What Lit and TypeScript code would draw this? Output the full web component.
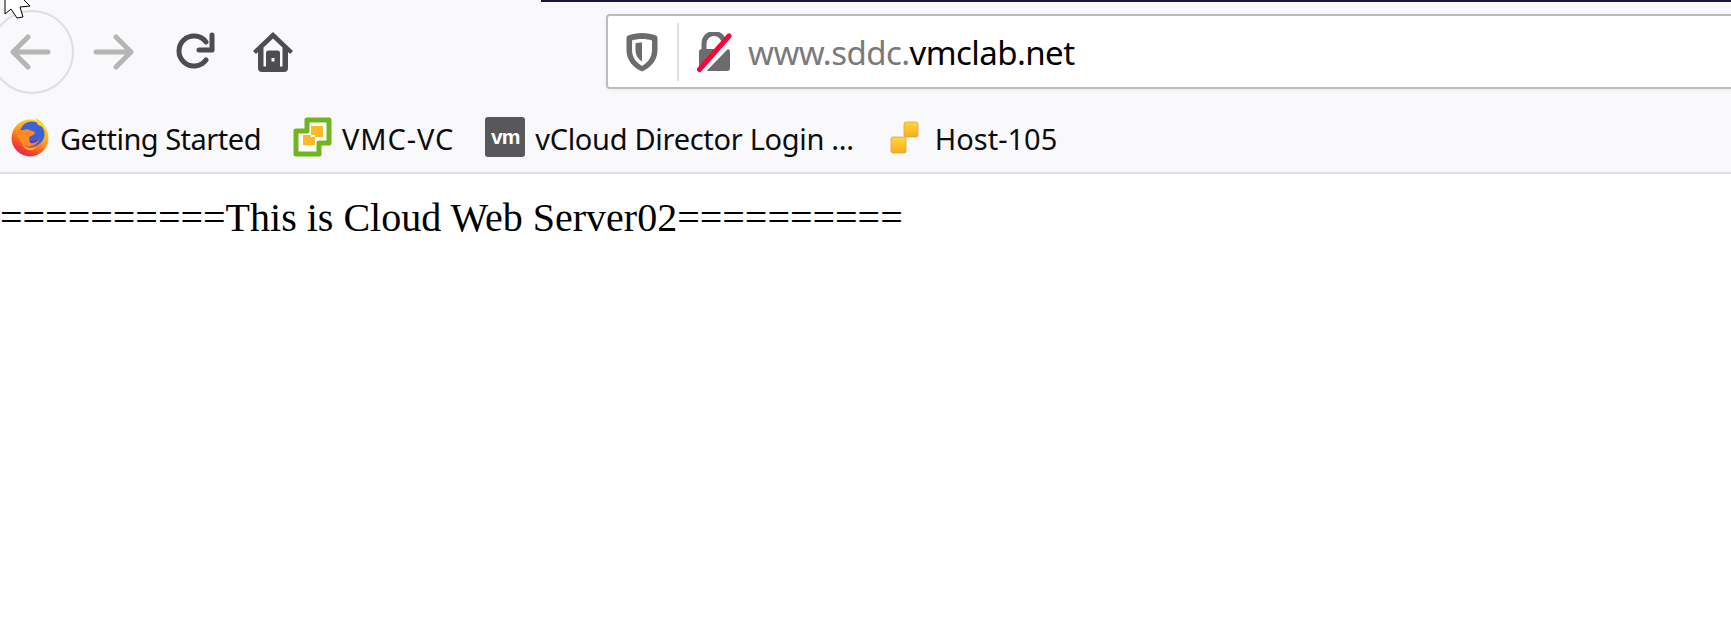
import { LitElement, html, css, svg } from 'lit';
import { customElement } from 'lit/decorators.js';

const firefoxIcon = svg`
  <svg width="40" height="40" viewBox="0 0 40 40">
    <defs>
      <linearGradient id="ff" x1="0.75" y1="0.05" x2="0.25" y2="1">
        <stop offset="0" stop-color="#ffd52e"/>
        <stop offset="0.45" stop-color="#ff9a1f"/>
        <stop offset="0.78" stop-color="#f5402c"/>
        <stop offset="1" stop-color="#d9246e"/>
      </linearGradient>
    </defs>
    <circle cx="20" cy="21" r="18.5" fill="url(#ff)"/>
    <circle cx="22" cy="17" r="12.5" fill="#3b62d6"/>
    <path d="M8 12 C12 14 14 13 17 12 L25 15 C25 18 21 19 19 20 C20 24 25 25 30 21 C28 28 20 31 14 28 C8 24 7 17 8 12 Z" fill="#ff8a22"/>
    <path d="M19 21 C21 24 26 24 30 21 C28 25 24 27 20 26 Z" fill="#5a3fb0"/>
    <path d="M25 1 C31 3 37 9 38.5 19 C36 13 33 9 28 8 C27 5 26 3 25 1 Z" fill="#ffd52e"/>
    <path d="M12 26 C15 31 22 33 28 29 C24 35 14 35 12 26 Z" fill="#ffb21f"/>
  </svg>
`;

const vmcIcon = svg`
  <svg width="40" height="40" viewBox="0 0 40 40">
    <path d="M15 3 H37 V26 H27 V37 H4 V14 H15 Z" fill="#fff" stroke="#6fb51f" stroke-width="5" stroke-linejoin="round"/>
    <path d="M19 9 H31 V20 H23 V28 H11 V18 H19 Z" fill="#fdb827"/>
    <path d="M19 18 H23 V20 H19 Z" fill="#fff"/>
  </svg>
`;

const vmIcon = html`<span class="vm">vm</span>`;

const hostIcon = svg`
  <svg width="40" height="40" viewBox="0 0 40 40">
    <defs>
      <linearGradient id="hy" x1="0" y1="0" x2="0" y2="1">
        <stop offset="0" stop-color="#ffd83a"/>
        <stop offset="1" stop-color="#f6ad1c"/>
      </linearGradient>
    </defs>
    <rect x="6" y="20" width="15" height="16" rx="2" fill="url(#hy)" stroke="#e0a23a" stroke-width="0.8"/>
    <rect x="19" y="5" width="14" height="15" rx="2" fill="url(#hy)" stroke="#e0a23a" stroke-width="0.8"/>
  </svg>
`;

const bookmarks = [
  { label: 'Getting Started', icon: firefoxIcon, tracking: -0.5 },
  { label: 'VMC-VC', icon: vmcIcon, tracking: 0.9 },
  { label: 'vCloud Director Login ...', icon: vmIcon, tracking: -0.3 },
  { label: 'Host-105', icon: hostIcon, tracking: 0 },
];

@customElement('app-root')
export class AppRoot extends LitElement {
  static styles = css`
    :host {
      display: block;
      height: 619px;
      background: #fff;
      overflow: hidden;
      position: relative;
    }

    .chrome {
      background: #f9f9fb;
      border-bottom: 2px solid #e0e0e2;
    }

    .top-edge {
      height: 2px;
      margin-left: 541px;
      background: #15173a;
    }

    .toolbar {
      height: 75px;
      padding-top: 12px;
      display: flex;
      align-items: flex-start;
    }

    .nav {
      width: 606px;
      flex: none;
      height: 76px;
      display: flex;
      align-items: center;
    }

    .nav svg {
      display: block;
      flex: none;
    }

    .back {
      flex: none;
      width: 84px;
      height: 84px;
      margin-left: -10px;
      box-sizing: border-box;
      border: 2px solid #dedee0;
      border-radius: 50%;
      display: flex;
      align-items: center;
      justify-content: center;
      padding-right: 4px;
    }

    .forward {
      margin-left: 19px;
    }

    .reload {
      margin-left: 42px;
    }

    .home {
      margin-left: 36px;
    }

    .urlbar {
      flex: 1;
      height: 75px;
      margin-right: -4px;
      box-sizing: border-box;
      background: #fff;
      border: 2px solid #bcbcbc;
      border-radius: 4px;
      box-shadow: 0 1px 5px rgba(0, 0, 0, 0.05);
      display: flex;
      align-items: center;
    }

    .urlbar svg {
      display: block;
      flex: none;
    }

    .shield {
      margin-left: 18px;
    }

    .divider {
      width: 2px;
      height: 58px;
      margin-left: 19px;
      background: #e0e0e2;
    }

    .lock {
      margin-left: 18px;
    }

    .url {
      margin: 2px 0 0 16px;
      font-family: 'Noto Sans', sans-serif;
      font-size: 33px;
      letter-spacing: -0.55px;
      color: #7a7a7c;
      white-space: nowrap;
    }

    .url b {
      font-weight: 400;
      color: #000;
    }

    .bookmarks {
      height: 67px;
      padding: 16px 0 0 10px;
      display: flex;
      align-items: center;
      gap: 31px;
    }

    .bookmark {
      display: flex;
      align-items: center;
      gap: 10px;
      font-family: 'Noto Sans', sans-serif;
      font-size: 29px;
      color: #0c0c0d;
      white-space: nowrap;
    }

    .bookmark svg {
      display: block;
      flex: none;
      margin-top: -3px;
    }

    .vm {
      width: 40px;
      height: 40px;
      margin-top: -3px;
      border-radius: 3px;
      background: #58585a;
      color: #fff;
      font-family: 'Liberation Sans', sans-serif;
      font-weight: 700;
      font-size: 21px;
      letter-spacing: -1px;
      line-height: 40px;
      text-align: center;
    }

    main {
      padding-top: 21px;
      font-family: 'Liberation Serif', serif;
      font-size: 40px;
      line-height: 46px;
      color: #000;
      white-space: nowrap;
    }

    .cursor {
      position: absolute;
      left: 4px;
      top: -1px;
    }
  `;

  render() {
    return html`
      <div class="chrome">
        <div class="top-edge"></div>
        <div class="toolbar">
          <div class="nav">
            <div class="back">
              <svg width="41" height="36" viewBox="0 0 41 36" fill="none" stroke="#b5b5b6" stroke-width="5" stroke-linecap="round" stroke-linejoin="round">
                <path d="M3 18 H38 M18 3 L3 18 L18 33"/>
              </svg>
            </div>
            <svg class="forward" width="41" height="36" viewBox="0 0 41 36" fill="none" stroke="#b5b5b6" stroke-width="5" stroke-linecap="round" stroke-linejoin="round">
              <path d="M3 18 H38 M23 3 L38 18 L23 33"/>
            </svg>
            <svg class="reload" width="40" height="40" viewBox="0 0 40 40" fill="none" stroke="#4d4d4f" stroke-width="5" stroke-linecap="round" stroke-linejoin="round">
              <path d="M30 28 A15 15 0 1 1 30 10"/>
              <path d="M36 3 V18 H23"/>
            </svg>
            <svg class="home" width="42" height="42" viewBox="0 0 42 42">
              <path d="M21 1 L41 20 L38 23 L36 21 V37 Q36 41 32 41 H10 Q6 41 6 37 V21 L4 23 L1 20 Z" fill="#4d4d4f"/>
              <path d="M21 7.5 L30.5 16.5 V35.5 H28 V22 Q28 19.5 25.5 19.5 H16.5 Q14 19.5 14 22 V35.5 H11.5 V16.5 Z" fill="#f9f9fb"/>
              <rect x="19.5" y="27" width="3" height="3.5" fill="#f9f9fb"/>
            </svg>
          </div>
          <div class="urlbar">
            <svg class="shield" width="32" height="40" viewBox="0 0 32 40">
              <path d="M16 1 C21 1 26 2 30 3.5 Q31.5 4 31.5 6 V18 C31.5 29 24 36 16 39.5 C8 36 0.5 29 0.5 18 V6 Q0.5 4 2 3.5 C6 2 11 1 16 1 Z" fill="#6c6c6e"/>
              <path d="M16 7 C20 7 23 7.5 26 8.5 V18 C26 26 21 31 16 34 C11 31 6 26 6 18 V8.5 C9 7.5 12 7 16 7 Z" fill="#fff"/>
              <path d="M16 10.5 V29.5 C12 27 9.5 23 9.5 18 V11.3 C11.5 10.8 13.5 10.5 16 10.5 Z" fill="#6c6c6e"/>
            </svg>
            <div class="divider"></div>
            <svg class="lock" width="35" height="40" viewBox="0 0 35 40">
              <path d="M7 18 V12 C7 5 12 1.5 17 1.5 C22 1.5 27 5 27 12 V18" fill="none" stroke="#6c6c6e" stroke-width="5"/>
              <rect x="2" y="17" width="31" height="22" rx="3" fill="#6c6c6e"/>
              <path d="M2 41 L36 6" stroke="#fff" stroke-width="8"/>
              <path d="M2.5 37.5 L32 4" stroke="#ff0039" stroke-width="5" stroke-linecap="round"/>
            </svg>
            <span class="url">www.sddc.<b>vmclab.net</b></span>
          </div>
        </div>
        <div class="bookmarks">
          ${bookmarks.map(
            (b) => html`<div class="bookmark">${b.icon}<span style="letter-spacing: ${b.tracking}px">${b.label}</span></div>`
          )}
        </div>
      </div>
      <main>==========This is Cloud Web Server02==========</main>
      <svg class="cursor" width="30" height="22" viewBox="0 0 30 22">
        <path d="M1 -18 L1 15 L7 10 L13 19 L19 18 L16 8 L26 7 Z" fill="#fff" stroke="#000" stroke-width="1"/>
      </svg>
    `;
  }
}
